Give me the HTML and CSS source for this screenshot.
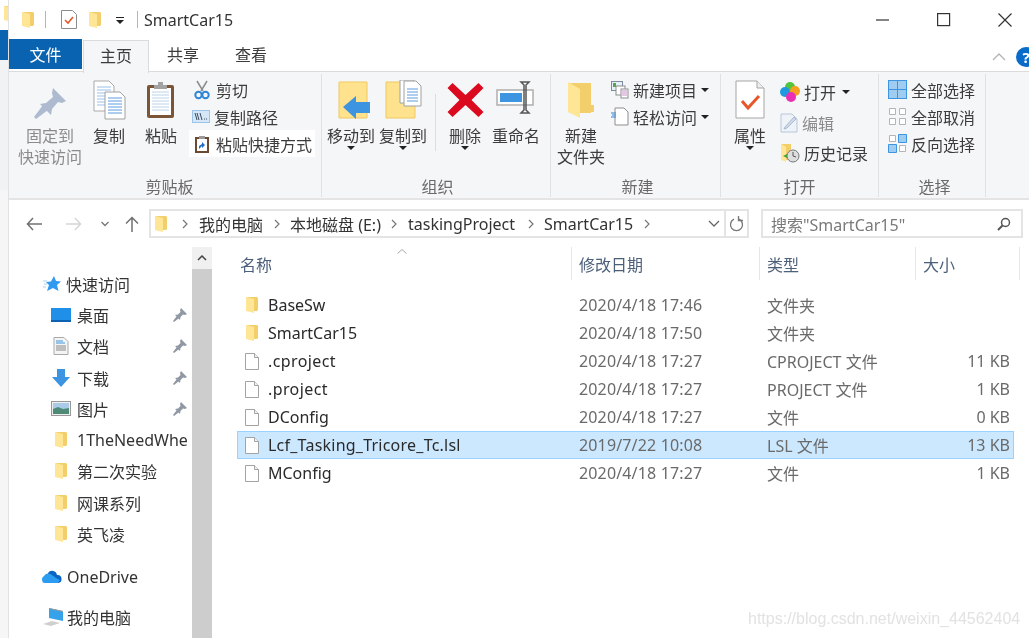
FILE: index.html
```html
<!DOCTYPE html>
<html lang="zh-CN">
<head>
<meta charset="utf-8">
<title>SmartCar15</title>
<link rel="stylesheet" href="styles.css">
</head>
<body>
<svg class="defs" aria-hidden="true">
  <symbol id="fld" viewBox="0 0 14 18"><path d="M2 1h10l1 1v12l-1 1H2z" fill="#f3cf6c"/><path d="M1 1l8 2v14l-8-2z" fill="#ffe596"/></symbol>
  <symbol id="doc" viewBox="0 0 14 17"><path d="M.5.5h9l4 4v12H.5z" fill="#fff" stroke="#a3a3a3"/><path d="M9.5.5v4h4" fill="#f2f2f2" stroke="#a3a3a3"/></symbol>
  <symbol id="pin" viewBox="0 0 14 14"><path d="M8 0l6 6-2 1-2-.5L7.500 9l-.5 3-5-5 3-.5L7.500 4 7 2zM3.500 8.500l2 2L1 14l-1-1z" fill="#8f98a3"/></symbol>
</svg>

<div class="page">
  <aside class="behind">
    <div class="behind-top"><svg class="behind-fld" width="14" height="18"><use href="#fld"/></svg></div>
    <div class="behind-blue"></div>
    <div class="behind-grey"></div>
    <div class="behind-low"></div>
  </aside>

  <main class="window">
    <header class="titlebar">
      <svg class="qa-fld" width="14" height="18"><use href="#fld"/></svg>
      <span class="qa-sep"></span>
      <svg class="qa-check" width="16" height="19" viewBox="0 0 16 19"><path d="M.5.500h11l4 4v14H.500z" fill="#fff" stroke="#8c8c8c"/><path d="M4 10l3 3 5-6" fill="none" stroke="#e8562a" stroke-width="1.600"/></svg>
      <svg class="qa-fld2" width="14" height="18"><use href="#fld"/></svg>
      <svg class="qa-down" width="8" height="7" viewBox="0 0 8 7"><path d="M0 0h8v1H0zM0 3h8L4 7z" fill="#222"/></svg>
      <span class="qa-sep second"></span>
      <span class="title">SmartCar15</span>
      <div class="winctl">
        <svg width="14" height="14" viewBox="0 0 14 14"><path d="M0 7h13" stroke="#333" stroke-width="1.200"/></svg>
        <svg width="14" height="14" viewBox="0 0 14 14"><rect x=".6" y=".6" width="12" height="12" fill="none" stroke="#333" stroke-width="1.200"/></svg>
        <svg width="14" height="14" viewBox="0 0 14 14"><path d="M.5.500l13 13M13.500.500l-13 13" stroke="#333" stroke-width="1.200"/></svg>
      </div>
    </header>

    <nav class="tabs">
      <span class="tab file">文件</span>
      <span class="tab home">主页</span>
      <span class="tab">共享</span>
      <span class="tab">查看</span>
      <div class="tabs-right">
        <svg width="14" height="8" viewBox="0 0 14 8"><path d="M1 7l6-6 6 6" fill="none" stroke="#b4b4b4" stroke-width="1.300"/></svg>
        <span class="help">?</span>
      </div>
    </nav>

    <section class="ribbon">
      <div class="group g-clip">
        <div class="group-body">
          <div class="big w64 muted">
            <div class="ico"><svg width="40" height="40" viewBox="0 0 40 40"><path d="M23 8l13 13-4 2-4-1-6 7-1 6-11-11 6-1 7-6-1-4zM13 25l5 5-12 9-2-2z" fill="#aebad0"/></svg></div>
            <span>固定到</span><span>快速访问</span>
          </div>
          <div class="big w52 ml1">
            <div class="ico"><svg width="40" height="40" viewBox="0 0 40 40"><path d="M5 1h15l5 5v25H5z" fill="#fff" stroke="#a9a9a9"/><path d="M8 7h14M8 10h14M8 13h14M8 16h14M8 19h14M8 22h8M8 25h8" stroke="#9cc0ea"/><path d="M16 12h15l5 5v22H16z" fill="#fff" stroke="#a0a0a0"/><path d="M19 18h14M19 21h14M19 24h14M19 27h14M19 30h14M19 33h14" stroke="#5d9be0"/></svg></div>
            <span>复制</span>
          </div>
          <div class="big w52">
            <div class="ico"><svg width="40" height="40" viewBox="0 0 40 40"><rect x="6" y="5" width="27" height="33" rx="2" fill="#7a5538"/><rect x="9" y="8" width="21" height="27" fill="#fff"/><path d="M11 12h17M11 15h17M11 18h17M11 21h17M11 24h17M11 27h17M11 30h17" stroke="#bcd2ec"/><path d="M13 5h13v4H13zM17 2h5v3h-5z" fill="#a3a3a3"/></svg></div>
            <span>粘贴</span>
          </div>
          <div class="list mt2 ml2">
            <div class="row"><svg width="16" height="20" viewBox="0 0 16 20"><path d="M3 1l6 10M13 1L7 11" stroke="#8d8d8d" stroke-width="1.500"/><circle cx="4.500" cy="15" r="3.200" fill="none" stroke="#2f86d6" stroke-width="2"/><circle cx="11.500" cy="15" r="3.200" fill="none" stroke="#2f86d6" stroke-width="2"/></svg><span>剪切</span></div>
            <div class="row"><svg width="18" height="13" viewBox="0 0 18 13" class="nudge"><rect x=".5" y=".5" width="17" height="12" fill="#d4e6f8" stroke="#9cc4ea"/><path d="M3 3l2 7M5 3l2 7M8 3l2 7M12 9h1M14 9h1" stroke="#3a4a5a"/></svg><span>复制路径</span></div>
            <div class="row white"><svg width="16" height="20" viewBox="0 0 16 20"><rect x="1" y="3" width="14" height="16" fill="#6a4a32"/><rect x="3" y="5" width="10" height="12" fill="#fff"/><path d="M5 2h6v3H5z" fill="#999"/><path d="M5 15v-3l3-2V8l3 3-3 3v-2l-1 1z" fill="#1f6fc4"/></svg><span>粘贴快捷方式</span></div>
          </div>
        </div>
        <div class="group-label">剪贴板</div>
      </div>

      <div class="group g-org">
        <div class="group-body">
          <div class="big w52">
            <div class="ico"><svg width="40" height="40" viewBox="0 0 40 40"><path d="M8 2h28v36H8z" fill="#ffe28d" stroke="#efc95e"/><path d="M12 27l13-11v6h14v11H25v6z" fill="#3d94e0"/></svg></div>
            <span>移动到</span><i class="caret"></i>
          </div>
          <div class="big w52">
            <div class="ico"><svg width="40" height="40" viewBox="0 0 40 40"><path d="M3 2h29v36H3z" fill="#ffe28d" stroke="#efc95e"/><path d="M17 0h13l5 5v18H17z" fill="#fff" stroke="#a0a0a0"/><path d="M21 1h12l5 5v20H21z" fill="#fff" stroke="#a0a0a0"/><path d="M24 9h11M24 12h11M24 15h11M24 18h11M24 21h11" stroke="#5d9be0"/></svg></div>
            <span>复制到</span><i class="caret"></i>
          </div>
          <span class="vsep"></span>
          <div class="big w52">
            <div class="ico"><svg width="40" height="40" viewBox="0 0 40 40"><path d="M7 3l13 12L33 3l5 5-12 12 12 12-5 5-13-12L7 37l-5-5 12-12L2 8z" fill="#dc0a1e" transform="translate(.5 0)"/></svg></div>
            <span>删除</span><i class="caret"></i>
          </div>
          <div class="big w50">
            <div class="ico"><svg width="40" height="40" viewBox="0 0 40 40"><rect x="1" y="10" width="36" height="15" fill="#fff" stroke="#aeaeae" stroke-width="1.500"/><rect x="4" y="13" width="22" height="9" fill="#3d94e0"/><path d="M25 2h8l-3 3v25l3 3h-8l3-3V5z" fill="none" stroke="#555" stroke-width="1.500"/></svg></div>
            <span>重命名</span>
          </div>
        </div>
        <div class="group-label">组织</div>
      </div>

      <div class="group g-new">
        <div class="group-body">
          <div class="big w52">
            <div class="ico"><svg width="40" height="40" viewBox="0 0 40 40"><path d="M8 3h22v30H8z" fill="#f3cf6c"/><path d="M27 25h6v7h-6z" fill="#f3cf6c"/><path d="M7 2l12 7v29L7 32z" fill="#ffe596"/></svg></div>
            <span>新建</span><span>文件夹</span>
          </div>
          <div class="list mt2">
            <div class="row wide"><svg width="18" height="18" viewBox="0 0 18 18"><rect x=".5" y=".5" width="11" height="9" fill="#e8f1fa" stroke="#7c8a99"/><rect x="2" y="2" width="3" height="4" fill="#5aa34f"/><rect x="5" y="5" width="9" height="9" fill="#fff" stroke="#8d8d8d"/><rect x="10" y="8" width="7" height="9" fill="#fff" stroke="#8d8d8d"/><path d="M11 10h5M11 12h5M11 14h5" stroke="#c78dc4"/></svg><span>新建项目</span><i class="caret side"></i></div>
            <div class="row wide"><svg width="18" height="19" viewBox="0 0 18 19"><path d="M4 1h9l4 4v13H4z" fill="#fff" stroke="#8d8d8d"/><path d="M0 6h5M1 8h4M0 10h5" stroke="#2f86d6"/></svg><span>轻松访问</span><i class="caret side"></i></div>
          </div>
        </div>
        <div class="group-label">新建</div>
      </div>

      <div class="group g-open">
        <div class="group-body">
          <div class="big w52 ml3">
            <div class="ico"><svg width="40" height="40" viewBox="0 0 40 40"><path d="M6 1h21l7 7v30H6z" fill="#fff" stroke="#a5a5a5"/><path d="M27 1v7h7" fill="#eee" stroke="#a5a5a5"/><path d="M12 21l6 7 11-12" fill="none" stroke="#e8562a" stroke-width="3"/></svg></div>
            <span>属性</span><i class="caret"></i>
          </div>
          <div class="list tall">
            <div class="row"><svg width="20" height="20" viewBox="0 0 20 20" class="nudge"><circle cx="10" cy="5" r="5" fill="#54c43c"/><circle cx="5" cy="10" r="5" fill="#1f9ae0"/><circle cx="15" cy="9" r="5" fill="#f5a01e"/><circle cx="11" cy="15" r="5" fill="#ea2fb4"/></svg><span>打开</span><i class="caret side"></i></div>
            <div class="row dim"><svg width="18" height="20" viewBox="0 0 18 20" class="nudge"><path d="M1 1h11l5 5v13H1z" fill="#eef3f9" stroke="#b9c6d8"/><path d="M5 14L14 4l2 2-9 9-3 1z" fill="#cfdbea" stroke="#a9b9cf"/></svg><span>编辑</span></div>
            <div class="row"><svg width="20" height="20" viewBox="0 0 20 20" class="nudge"><path d="M2 1h9v16H2z" fill="#f3cf6c"/><path d="M1 1l5 3v15l-5-2z" fill="#ffe596"/><circle cx="13" cy="13" r="6" fill="#dedede" stroke="#777"/><path d="M13 9v4l3 1" stroke="#555" fill="none"/><path d="M3 13l4-2v4z" fill="#43a33c"/></svg><span>历史记录</span></div>
          </div>
        </div>
        <div class="group-label">打开</div>
      </div>

      <div class="group g-sel">
        <div class="group-body">
          <div class="list mt2">
            <div class="row wide"><svg width="19" height="19" viewBox="0 0 19 19"><rect x=".5" y=".5" width="18" height="18" fill="#9fcdf2" stroke="#3d94e0"/><path d="M9.500 0v19M0 9.500h19" stroke="#3d94e0"/></svg><span>全部选择</span></div>
            <div class="row wide"><svg width="19" height="19" viewBox="0 0 19 19"><path d="M1.500 1.500h6v6h-6zM11.500 1.500h6v6h-6zM1.500 11.500h6v6h-6zM11.500 11.500h6v6h-6z" fill="#fff" stroke="#b4b4b4"/></svg><span>全部取消</span></div>
            <div class="row wide"><svg width="19" height="19" viewBox="0 0 19 19"><path d="M1.500 1.500h6v6h-6zM11.500 11.500h6v6h-6z" fill="#fff" stroke="#b4b4b4"/><path d="M10.500.500h8v8h-8zM.500 10.500h8v8h-8z" fill="#9fcdf2" stroke="#3d94e0"/></svg><span>反向选择</span></div>
          </div>
        </div>
        <div class="group-label">选择</div>
      </div>
    </section>

    <section class="addressrow">
      <svg class="nav-back" width="16" height="14" viewBox="0 0 16 14"><path d="M16 7H2M7 1L1.500 7 7 13" fill="none" stroke="#707070" stroke-width="1.500"/></svg>
      <svg class="nav-fwd" width="16" height="14" viewBox="0 0 16 14"><path d="M0 7h14M9 1l5.500 6L9 13" fill="none" stroke="#d6d6d6" stroke-width="1.500"/></svg>
      <svg class="nav-hist" width="8" height="6" viewBox="0 0 8 6"><path d="M.5 1L4 4.500 7.500 1" fill="none" stroke="#777" stroke-width="1.300"/></svg>
      <svg class="nav-up" width="14" height="16" viewBox="0 0 14 16"><path d="M7 16V2M1 7.500L7 1.500l6 6" fill="none" stroke="#707070" stroke-width="1.500"/></svg>
      <div class="address">
        <svg width="14" height="18"><use href="#fld"/></svg>
        <svg class="chev first" width="6" height="10" viewBox="0 0 6 10"><path d="M1 1l4 4-4 4" fill="none" stroke="#777" stroke-width="1.200"/></svg>
        <span>我的电脑</span>
        <svg class="chev" width="6" height="10" viewBox="0 0 6 10"><path d="M1 1l4 4-4 4" fill="none" stroke="#777" stroke-width="1.200"/></svg>
        <span>本地磁盘 (E:)</span>
        <svg class="chev" width="6" height="10" viewBox="0 0 6 10"><path d="M1 1l4 4-4 4" fill="none" stroke="#777" stroke-width="1.200"/></svg>
        <span class="seg-wide">taskingProject</span>
        <svg class="chev" width="6" height="10" viewBox="0 0 6 10"><path d="M1 1l4 4-4 4" fill="none" stroke="#777" stroke-width="1.200"/></svg>
        <span>SmartCar15</span>
        <svg class="chev" width="6" height="10" viewBox="0 0 6 10"><path d="M1 1l4 4-4 4" fill="none" stroke="#777" stroke-width="1.200"/></svg>
        <div class="addr-end">
          <svg width="12" height="7" viewBox="0 0 12 7"><path d="M1 1l5 5 5-5" fill="none" stroke="#666" stroke-width="1.300"/></svg>
          <span class="refresh"><svg width="15" height="16" viewBox="0 0 15 16"><path d="M5 3.200a6 6 0 1 0 5 0" fill="none" stroke="#777" stroke-width="1.300"/><path d="M10.500 0v4.500H15" fill="none" stroke="#777" stroke-width="1.300" transform="translate(-1 0)"/></svg></span>
        </div>
      </div>
      <div class="search">
        <span>搜索"SmartCar15"</span>
        <svg width="14" height="14" viewBox="0 0 14 14"><circle cx="8.500" cy="5.500" r="4" fill="none" stroke="#555" stroke-width="1.500"/><path d="M5.500 8.500L1 13" stroke="#555" stroke-width="2"/></svg>
      </div>
    </section>

    <section class="content">
      <div class="sidebar">
        <div class="nav top"><svg width="18" height="16" viewBox="0 0 18 16"><path d="M11 0l2 5 5 .5-4 3.500 1.500 6L10 12l-6 3 2-6-3-3 5-.5z" fill="#2f9af0"/><path d="M0 5h4M1 8h3M0 11h3" stroke="#a8d4f6"/></svg><span>快速访问</span></div>
        <div class="nav sub"><svg width="20" height="14" viewBox="0 0 20 14"><rect width="20" height="14" fill="#1f8fe8"/><rect y="12" width="20" height="2" fill="#0c62b0"/></svg><span>桌面</span><svg class="tack"><use href="#pin"/></svg></div>
        <div class="nav sub"><svg width="20" height="18" viewBox="0 0 20 18"><path d="M3 .5h10l4 4v13H3z" fill="#f4f4f4" stroke="#a9a9a9"/><path d="M5 4h7M5 6h9" stroke="#3d94e0"/><path d="M5 9h10M5 11h10M5 13h10" stroke="#888"/></svg><span>文档</span><svg class="tack"><use href="#pin"/></svg></div>
        <div class="nav sub"><svg width="20" height="18" viewBox="0 0 20 18"><path d="M6 0h8v8h5l-9 10L1 8h5z" fill="#3d94e0"/></svg><span>下载</span><svg class="tack"><use href="#pin"/></svg></div>
        <div class="nav sub"><svg width="20" height="15" viewBox="0 0 20 15"><rect x=".5" y=".5" width="19" height="14" fill="#eee" stroke="#999"/><rect x="2" y="2" width="16" height="6" fill="#a9cbe8"/><path d="M2 8l5-2 5 2 6-1v6H2z" fill="#4f8a76"/></svg><span>图片</span><svg class="tack"><use href="#pin"/></svg></div>
        <div class="nav sub"><svg class="sfld" width="14" height="18"><use href="#fld"/></svg><span>1TheNeedWhe</span></div>
        <div class="nav sub"><svg class="sfld" width="14" height="18"><use href="#fld"/></svg><span>第二次实验</span></div>
        <div class="nav sub"><svg class="sfld" width="14" height="18"><use href="#fld"/></svg><span>网课系列</span></div>
        <div class="nav sub"><svg class="sfld" width="14" height="18"><use href="#fld"/></svg><span>英飞凌</span></div>
        <div class="nav root"><svg width="22" height="14" viewBox="0 0 22 14"><path d="M8 3a5 5 0 0 1 9 2 4 4 0 0 1 1 8H9z" fill="#0a64c4"/><path d="M4 13a4 4 0 0 1 0-7 5 5 0 0 1 8-1l4 3 4 2-2 3z" fill="#2b9cf0"/></svg><span>OneDrive</span></div>
        <div class="nav root pc"><svg width="22" height="18" viewBox="0 0 22 18"><path d="M7 0l14 3v10L7 10z" fill="#35a2ea"/><path d="M7 0l14 3v1L7 1z" fill="#9a9a9a"/><path d="M1 16l9-3 8 2-9 3z" fill="#cfcfcf"/></svg><span>我的电脑</span></div>
      </div>

      <div class="scrollbar">
        <div class="sb-up"><svg width="10" height="6" viewBox="0 0 10 6"><path d="M1 5l4-4 4 4" fill="none" stroke="#444" stroke-width="1.500"/></svg></div>
      </div>

      <div class="files">
        <svg class="sort" width="10" height="5" viewBox="0 0 10 5"><path d="M.5 4.500L5 .5l4.500 4" fill="none" stroke="#a8a8a8"/></svg>
        <div class="head">
          <div class="hc c1">名称</div>
          <div class="hc c2">修改日期</div>
          <div class="hc c3">类型</div>
          <div class="hc c4">大小</div>
        </div>
        <div class="rows">
          <div class="file-row"><div class="fname"><svg width="14" height="18"><use href="#fld"/></svg><span>BaseSw</span></div><span class="fdate">2020/4/18 17:46</span><span>文件夹</span><span class="fsize"></span></div>
          <div class="file-row"><div class="fname"><svg width="14" height="18"><use href="#fld"/></svg><span>SmartCar15</span></div><span class="fdate">2020/4/18 17:50</span><span>文件夹</span><span class="fsize"></span></div>
          <div class="file-row"><div class="fname spaced"><svg width="14" height="17"><use href="#doc"/></svg><span>.cproject</span></div><span class="fdate">2020/4/18 17:27</span><span>CPROJECT 文件</span><span class="fsize">11 KB</span></div>
          <div class="file-row"><div class="fname spaced"><svg width="14" height="17"><use href="#doc"/></svg><span>.project</span></div><span class="fdate">2020/4/18 17:27</span><span>PROJECT 文件</span><span class="fsize">1 KB</span></div>
          <div class="file-row"><div class="fname"><svg width="14" height="17"><use href="#doc"/></svg><span>DConfig</span></div><span class="fdate">2020/4/18 17:27</span><span>文件</span><span class="fsize">0 KB</span></div>
          <div class="file-row selected"><div class="fname long"><svg width="14" height="17"><use href="#doc"/></svg><span>Lcf_Tasking_Tricore_Tc.lsl</span></div><span class="fdate">2019/7/22 10:08</span><span>LSL 文件</span><span class="fsize">13 KB</span></div>
          <div class="file-row"><div class="fname"><svg width="14" height="17"><use href="#doc"/></svg><span>MConfig</span></div><span class="fdate">2020/4/18 17:27</span><span>文件</span><span class="fsize">1 KB</span></div>
        </div>
        <div class="watermark">https://blog.csdn.net/weixin_44562404</div>
      </div>
    </section>
  </main>
</div>
</body>
</html>
```

FILE: styles.css
```css
* { box-sizing: border-box; }
html, body { margin: 0; padding: 0; height: 100%; background: #fff; overflow: hidden; }
body {
  font-family: "Noto Sans", "Noto Sans CJK SC", sans-serif;
  font-size: 16px;
  color: #3a3a3a;
}
.defs { width: 0; height: 0; display: block; overflow: hidden; position: absolute; }
svg { display: block; flex: none; }

.page { display: flex; width: 1029px; height: 638px; overflow: hidden; }

/* window behind */
.behind { width: 9px; flex: none; display: flex; flex-direction: column; border-right: 1px solid #e2e2e2; overflow: hidden; }
.behind-top { height: 30px; padding: 5px 0 0 3px; background: #fff; }
.behind-blue { height: 30px; background: #0a63b0; }
.behind-grey { height: 130px; background: #f1f2f3; }
.behind-low { flex: 1; background: #f6f6f6; }

.window { flex: 1; display: flex; flex-direction: column; min-width: 0; filter: blur(0.35px); }

/* title bar */
.titlebar { height: 39px; flex: none; display: flex; align-items: center; padding-left: 12px; }
.qa-fld { margin-top: 1px; }
.qa-sep { width: 1px; height: 17px; background: #b5b5b5; margin-left: 10px; }
.qa-check { margin-left: 15px; }
.qa-fld2 { margin-left: 11px; }
.qa-down { margin-left: 14px; margin-top: 2px; }
.qa-sep.second { margin-left: 13px; }
.title { margin-left: 6px; color: #333; line-height: 22px; }
.winctl { margin-left: auto; display: flex; gap: 47px; padding-right: 17px; }

/* tabs */
.tabs { height: 33px; flex: none; display: flex; align-items: flex-start; position: relative; z-index: 1; margin-bottom: -1px; }
.tab { width: 68px; height: 30px; line-height: 32px; text-align: center; color: #3c3c3c; }
.tab.file { width: 73px; background: #0a63b0; color: #fff; margin-right: 1px; }
.tab.home { width: 66px; height: 33px; margin-top: 1px; line-height: 30px; background: #f5f6f7; border: 1px solid #dadbdc; border-bottom: 0; }
.tabs-right { margin-left: auto; display: flex; align-items: center; gap: 10px; height: 30px; margin-top: 3px; margin-right: -7px; }
.help { width: 20px; height: 20px; border-radius: 50%; background: #0a6cc9; color: #fff; font-weight: 700; font-size: 15px; line-height: 20px; text-align: center; }

/* ribbon */
.ribbon { height: 129px; flex: none; display: flex; background: #f5f6f7; border-top: 1px solid #dadbdc; border-bottom: 2px solid #e4e4e4; padding-top: 2px; }
.group { display: flex; flex-direction: column; height: 123px; border-right: 1px solid #e0e1e2; }
.group-body { flex: 1; display: flex; align-items: flex-start; min-height: 0; }
.group-label { height: 22px; line-height: 22px; text-align: center; color: #6a6a6a; flex: none; margin-bottom: -1px; }
.g-clip { width: 313px; padding-left: 9px; }
.g-org { width: 229px; padding-left: 3px; }
.g-new { width: 170px; padding-left: 4px; }
.g-open { width: 158px; }
.g-sel { width: 107px; padding-left: 5px; }

.big { display: flex; flex-direction: column; align-items: center; line-height: 21px; white-space: nowrap; flex: none; color: #3c3c3c; }
.big.muted { color: #8b8b8b; }
.w64 { width: 64px; }
.w52 { width: 52px; }
.w50 { width: 50px; }
.ml1 { margin-left: 1px; }
.ml2 { margin-left: 2px; }
.ml3 { margin-left: 3px; }
.mt2 { margin-top: 2px; }
.ico { height: 52px; padding-bottom: 1px; display: flex; align-items: center; justify-content: center; }
.caret { display: block; width: 0; height: 0; border-left: 4px solid transparent; border-right: 4px solid transparent; border-top: 4px solid #222; margin-top: -1px; }
.caret.side { margin: 0; }
.vsep { width: 1px; height: 57px; background: #dcdde0; margin: 20px 3px 0 6px; flex: none; }

.list { display: flex; flex-direction: column; align-items: flex-start; }
.row { height: 27px; display: flex; align-items: center; gap: 6px; padding: 0 3px 0 5px; white-space: nowrap; color: #3c3c3c; }
.row.wide { gap: 4px; padding-left: 4px; }
.row.white { background: #fff; }
.row.dim { color: #8b8b8b; }
.nudge { margin: 0 -2px 0 -2px; }
.tall { margin: 3px 0 0 1px; }
.tall .row { height: 30.500px; }

/* address */
.addressrow { height: 44px; flex: none; display: flex; align-items: center; position: relative; padding-top: 3px; }
.nav-back { margin-left: 17px; }
.nav-fwd { margin-left: 24px; }
.nav-hist { margin-left: 19px; }
.nav-up { margin-left: 16px; }
.address { margin-left: 10px; width: 600px; height: 29px; border: 2px solid #e4e4e4; display: flex; align-items: center; padding-left: 3px; white-space: nowrap; color: #333; }
.chev { margin: 0 10.500px; flex: none; }
.chev.first { margin: 0 11px 0 14px; }
.seg-wide { margin-right: 2px; }
.addr-end { margin-left: auto; display: flex; align-items: center; height: 100%; gap: 4px; }
.refresh { display: flex; align-items: center; justify-content: center; width: 23px; height: 100%; border-left: 2px solid #e4e4e4; }
.search { margin-left: 12px; width: 262px; height: 29px; border: 2px solid #e4e4e4; display: flex; align-items: center; justify-content: space-between; padding: 0 10px 0 8px; color: #7a7a7a; white-space: nowrap; }

/* main content */
.content { flex: 1; display: flex; min-height: 0; }
.sidebar { width: 183px; flex: none; padding-top: 24px; overflow: hidden; }
.nav { height: 31.300px; display: flex; align-items: center; white-space: nowrap; color: #333; overflow: hidden; }
.nav.top { padding-left: 34px; gap: 5px; }
.nav.sub { padding-left: 42px; gap: 6px; }
.nav.root { padding-left: 31px; gap: 5px; margin-top: 12px; }
.nav.root.pc { padding-left: 33px; gap: 3px; margin-top: 8px; }
.sfld { margin: 0 3px; }
.tack { width: 14px; height: 14px; margin-left: auto; margin-right: 5px; }

.scrollbar { width: 20px; flex: none; background: #cdcdcd; margin-top: 3px; }
.sb-up { height: 22px; background: #f0f0f0; display: flex; align-items: center; justify-content: center; }

.files { flex: 1; min-width: 0; position: relative; }
.sort { position: absolute; left: 185px; top: 5px; }
.head { display: flex; padding-top: 3px; }
.hc { height: 33px; line-height: 36px; border-right: 1px solid #e5e5e5; padding-left: 7px; color: #4c607a; flex: none; }
.c1 { width: 360px; padding-left: 28px; }
.c2 { width: 188px; }
.c3 { width: 156px; }
.c4 { width: 104px; }

.rows { margin: 11px 0 0 25px; width: 777px; }
.file-row { height: 28px; display: grid; grid-template-columns: 341px 188px 1fr 90px; align-items: center; color: #6a6a6a; border: 1px solid transparent; white-space: nowrap; }
.file-row.selected { background: #cce8ff; border-color: #99d1ff; }
.fname { display: flex; align-items: center; gap: 9px; padding-left: 7px; color: #2a2a2a; }
.fname.spaced { letter-spacing: 0.4px; }
.fname.long { letter-spacing: 0.23px; }
.fdate { letter-spacing: 0.15px; }
.fsize { text-align: right; padding-right: 3px; }

.watermark { position: absolute; left: 536px; top: 366px; font-family: "Liberation Sans", sans-serif; font-size: 16px; color: #e2e2e2; white-space: nowrap; }
```
